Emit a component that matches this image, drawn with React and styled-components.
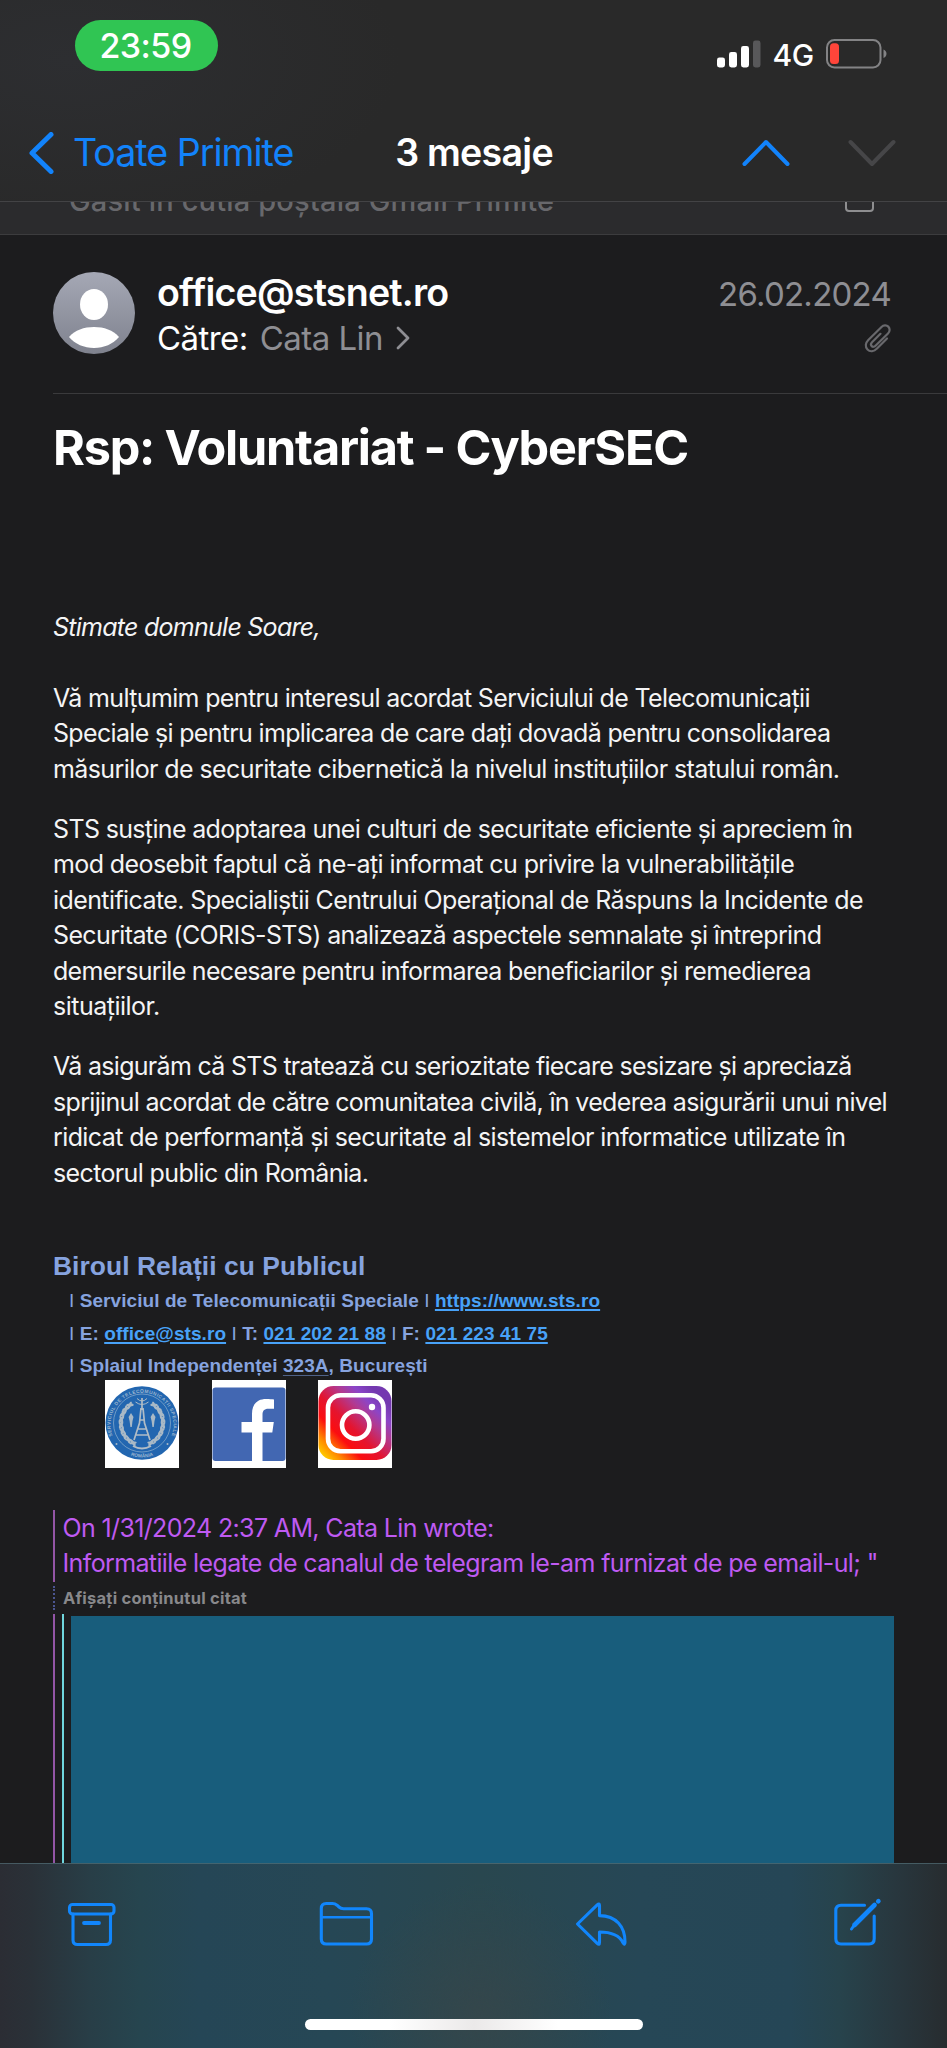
import React from 'react';
import styled, { createGlobalStyle } from 'styled-components';

const GlobalStyle = createGlobalStyle`
  *, *::before, *::after { box-sizing: border-box; }
  body { margin: 0; background: #1c1c1e; }
`;

const Screen = styled.div`
  width: 947px;
  height: 2048px;
  display: flex;
  flex-direction: column;
  overflow: hidden;
  background: #1c1c1e;
  color: #fff;
  font-family: Inter, 'Liberation Sans', sans-serif;
`;

/* ---------- top chrome ---------- */

const Chrome = styled.header`
  flex: none;
  height: 202px;
  border-bottom: 1px solid #434345;
  background:
    radial-gradient(ellipse 330px 170px at 70px 60px, #2d2e31, rgba(45, 46, 49, 0)),
    #292929;
`;

const StatusBar = styled.div`
  height: 104px;
  padding: 20px 59px 0 75px;
  display: flex;
  justify-content: space-between;
  align-items: flex-start;
`;

const TimePill = styled.div`
  width: 143px;
  height: 51px;
  padding-right: 2px;
  border-radius: 26px;
  background: #30c553;
  display: flex;
  align-items: center;
  justify-content: center;
  font-size: 34px;
  font-weight: 500;
  letter-spacing: -0.6px;
`;

const Indicators = styled.div`
  display: flex;
  align-items: center;
  margin-top: 13px;
  height: 42px;
`;

const Network = styled.span`
  font-size: 30px;
  font-weight: 500;
  letter-spacing: -0.3px;
  margin: 2px 12px 0 11px;
`;

const NavBar = styled.nav`
  height: 97px;
  padding: 0 51px 0 28px;
  display: grid;
  grid-template-columns: 1fr auto 1fr;
  align-items: center;
`;

const BackButton = styled.div`
  display: flex;
  align-items: center;
  gap: 19px;
  color: #1283fb;
  font-size: 37.6px;
  letter-spacing: -1px;
  white-space: nowrap;
`;

const NavTitle = styled.h1`
  margin: 0 0 0 24px;
  font-size: 37.6px;
  font-weight: 600;
  letter-spacing: -0.75px;
`;

const NavArrows = styled.div`
  display: flex;
  justify-content: flex-end;
  gap: 58px;
`;

const MailboxStrip = styled.div`
  flex: none;
  height: 33px;
  padding: 0 73px 0 69px;
  overflow: hidden;
  display: flex;
  justify-content: space-between;
  align-items: flex-start;
  background: #2b2b2d;
  border-bottom: 1px solid #3c3c3e;
`;

const MailboxText = styled.span`
  margin-top: -19px;
  line-height: 36px;
  font-size: 29px;
  font-weight: 500;
  letter-spacing: 0.17px;
  color: #68686c;
`;

const MailboxIcon = styled.svg`
  display: block;
  margin-top: -19px;
`;

/* ---------- message header ---------- */

const Message = styled.main`
  flex: 1;
  min-height: 0;
  overflow: hidden;
  padding-left: 53px;
`;

const MessageHeader = styled.section`
  height: 159px;
  padding: 35px 56px 0 0;
  display: flex;
  border-bottom: 1px solid #3a3a3c;
`;

const Avatar = styled.svg`
  flex: none;
  display: block;
  margin: 2px 22px 0 0;
`;

const Sender = styled.div`
  flex: 1;
`;

const SenderName = styled.div`
  line-height: 45px;
  font-size: 37.6px;
  font-weight: 600;
  letter-spacing: -0.78px;
`;

const Recipient = styled.div`
  display: flex;
  align-items: center;
  line-height: 46px;
  font-size: 33px;
  letter-spacing: -0.55px;
`;

const RecipientName = styled.span`
  margin: 0 13px 0 12px;
  color: #8e8e93;
`;

const Meta = styled.div`
  display: flex;
  flex-direction: column;
  align-items: flex-end;
`;

const DateText = styled.span`
  line-height: 48px;
  font-size: 33px;
  letter-spacing: -0.75px;
  color: #8e8e93;
`;

const ClipIcon = styled.svg`
  display: block;
  margin-top: 5px;
`;

const Subject = styled.h2`
  margin: 24px 0 0;
  line-height: 60px;
  font-size: 48.6px;
  font-weight: 700;
  letter-spacing: -1.22px;
`;

/* ---------- body ---------- */

const Greeting = styled.p`
  margin: 132px 0 35px;
  line-height: 35.5px;
  font-size: 25px;
  font-style: italic;
  letter-spacing: -0.74px;
  color: #f4f4f5;
`;

const Paragraph = styled.p`
  margin: 0 0 24.5px;
  color: #f4f4f5;
`;

const Line = styled.span`
  display: block;
  white-space: nowrap;
  line-height: 35.5px;
  font-size: 25px;
  letter-spacing: ${(p) => p.$track}px;
`;

const Signature = styled.section`
  padding-top: 32.5px;
  font-family: 'Liberation Sans', Arial, sans-serif;
  font-weight: 700;
  color: #86a3df;
`;

const Office = styled.div`
  line-height: 36px;
  font-size: 26.4px;
  letter-spacing: 0.06px;
  margin-bottom: 1px;
`;

const ContactLine = styled.div`
  padding-left: 16px;
  line-height: 32.6px;
  font-size: 19px;
  letter-spacing: 0.07px;
  white-space: nowrap;
`;

const Bar = styled.span`
  font-weight: 400;
`;

const Link = styled.span`
  color: #48a2f8;
  text-decoration: underline;
  text-decoration-thickness: 1.5px;
  text-underline-offset: 2px;
`;

const Detected = styled.span`
  text-decoration: underline;
  text-decoration-color: #4f6288;
  text-decoration-thickness: 1px;
  text-underline-offset: 3px;
`;

const Logos = styled.div`
  display: flex;
  gap: 32.5px;
  margin: -3px 0 42px 52px;
`;

const LogoTile = styled.svg`
  display: block;
  background: #fff;
`;

const Quote = styled.blockquote`
  margin: 0;
  height: 72px;
  border-left: 2px solid #9355a6;
  padding: 1px 0 0 7.5px;
  color: #bf5af2;
`;

const ShowQuoted = styled.div`
  height: 24px;
  margin: 4px 0;
  padding-left: 8px;
  border-left: 2px dotted #4b5591;
  line-height: 24px;
  font-size: 16.5px;
  font-weight: 700;
  letter-spacing: 0.24px;
  color: #88888b;
`;

const NestedQuote = styled.div`
  height: 260px;
  width: 841px;
  border-left: 2px solid #9355a6;
  padding-left: 7px;
`;

const InnerQuote = styled.div`
  height: 100%;
  border-left: 2px solid #70d6dd;
  padding: 2px 0 0 7px;
`;

const Redaction = styled.div`
  height: 100%;
  background: #185d7c;
`;

/* ---------- bottom toolbar ---------- */

const Toolbar = styled.footer`
  flex: none;
  height: 185px;
  border-top: 1px solid rgba(92, 125, 135, 0.55);
  padding: 33px 63px 18px 66px;
  display: flex;
  flex-direction: column;
  justify-content: space-between;
  align-items: center;
  background:
    radial-gradient(ellipse 130px 130px at 480px 150px, #34464b, rgba(52, 70, 75, 0)),
    linear-gradient(90deg, #2b2d34 0, #2a3138 32px, #283e47 90px, #26454f 140px, #254656 200px,
      #264755 330px, #29474f 480px, #264756 640px, #254656 790px, #27434c 840px, #28363d 900px, #272c2f 947px);
`;

const Actions = styled.div`
  width: 100%;
  display: flex;
  justify-content: space-between;
  align-items: flex-start;
`;

const HomeIndicator = styled.div`
  width: 338px;
  height: 11px;
  margin-right: 3px;
  border-radius: 6px;
  background: linear-gradient(90deg, #fff 25%, #ebe9e9 50%, #fff 75%);
`;

const ActionIcon = styled.svg`
  display: block;
  overflow: visible;
  fill: none;
  stroke: #1186fc;
  stroke-width: 3.1;
  stroke-linecap: round;
  stroke-linejoin: round;
`;

function Signal() {
  return (
    <svg width="44" height="28" viewBox="0 0 44 28" fill="#fff">
      <rect x="0" y="17.5" width="8" height="10" rx="2.4" />
      <rect x="12" y="12" width="8" height="15.500" rx="2.4" />
      <rect x="24" y="6" width="8" height="21.500" rx="2.4" />
      <rect x="36" y="0.500" width="7.500" height="27" rx="2.4" fill="#58585a" />
    </svg>
  );
}

function Battery() {
  return (
    <svg width="62" height="30" viewBox="0 0 62 30">
      <rect x="1" y="1" width="53.500" height="27.500" rx="7.500" fill="none" stroke="#838385" strokeWidth="2" />
      <rect x="4" y="4.300" width="9" height="20.800" rx="3.500" fill="#ff453a" />
      <path d="M57.500 10.500c4 1.200 4 7.300 0 8.500z" fill="#838385" />
    </svg>
  );
}

function Seal() {
  const leaves = [];
  for (let i = 0; i < 9; i += 1) {
    const deg = 115 + i * 15;
    const a = (deg * Math.PI) / 180;
    const x = 37 + 21 * Math.cos(a);
    const y = 43 + 22 * Math.sin(a);
    leaves.push(
      <g key={i}>
        <ellipse cx={x} cy={y} rx="1.500" ry="3.800" transform={`rotate(${deg + 30} ${x} ${y})`} />
        <ellipse cx={x} cy={y} rx="1.300" ry="3.600" transform={`rotate(${deg - 32} ${x} ${y})`} />
      </g>,
    );
  }
  return (
    <LogoTile width="74" height="88" viewBox="0 0 74 88">
      <defs>
        <path id="sealTop" d="M7.500 56A31.500 32 0 1 1 66.500 56" />
        <path id="sealBottom" d="M17 71A34 34 0 0 0 57 71" />
      </defs>
      <ellipse cx="37" cy="43" rx="36.500" ry="36.800" fill="#2266b0" />
      <ellipse cx="37" cy="43" rx="28.500" ry="29" fill="none" stroke="#8fb0cf" strokeWidth="0.700" />
      <g fill="#a9b9c6">
        {leaves}
        <g transform="translate(74 0) scale(-1 1)">{leaves}</g>
        <circle cx="11.500" cy="64" r="1" />
        <circle cx="62.500" cy="64" r="1" />
        <path d="M26 33l2.500 4-1 4-.7 6-1.400 0-.8-6-1-4zM48 33l2.500 4-1 4-.7 6-1.400 0-.8-6-1-4z" />
      </g>
      <g fill="none" stroke="#b0bcc6" strokeWidth="1.700">
        <path d="M37 18v12M36 28l-1.500 15L29 60M38 28l1.500 15L45 60M34.500 40h5M33 49h8M31 55h12" />
        <path d="M32 18.500q5 5 10 0M30.500 22q6.500 5 13 0" strokeWidth="1" />
        <path d="M28 66q9 5 18 0" strokeWidth="2" />
      </g>
      <g fill="#9db6cf" fontSize="4.800" fontFamily="Liberation Sans, sans-serif">
        <text><textPath href="#sealTop" textLength="122">SERVICIUL DE TELECOMUNICAȚII SPECIALE</textPath></text>
        <text><textPath href="#sealBottom" startOffset="50%" textAnchor="middle">ROMÂNIA</textPath></text>
      </g>
    </LogoTile>
  );
}

function Facebook() {
  return (
    <LogoTile width="74" height="88" viewBox="0 0 74 88">
      <rect x="0.500" y="7.500" width="73" height="73.500" rx="3" fill="#4267b2" />
      <path
        d="M40 88V52.500H29.500V42H40V34C40 24 45.500 19 54 19C57.500 19 60 19.200 62 19.600V28.800H56.500C52 28.800 50.500 31 50.500 35V42H61.800L60.300 52.500H50.500V88Z"
        fill="#fff"
      />
    </LogoTile>
  );
}

function Instagram() {
  return (
    <LogoTile width="74" height="88" viewBox="0 0 74 88">
      <defs>
        <linearGradient id="igBase" x1="0.050" y1="0.950" x2="0.850" y2="0.150">
          <stop offset="0" stopColor="#ffd000" />
          <stop offset="0.140" stopColor="#ff8a00" />
          <stop offset="0.320" stopColor="#fb0d10" />
          <stop offset="0.500" stopColor="#e4142f" />
          <stop offset="0.720" stopColor="#b13a92" />
          <stop offset="0.860" stopColor="#8b45c8" />
          <stop offset="1" stopColor="#7439b0" />
        </linearGradient>
      </defs>
      <rect x="0.500" y="6" width="73" height="74" rx="15" fill="url(#igBase)" />
      <g fill="none" stroke="#fff" strokeWidth="4.600">
        <rect x="10" y="15.300" width="55.500" height="56" rx="12.500" />
        <circle cx="37.700" cy="45" r="13.700" />
      </g>
      <circle cx="54" cy="27" r="3.200" fill="#fff" />
    </LogoTile>
  );
}

const paragraphs = [
  [
    ['Vă mulțumim pentru interesul acordat Serviciului de Telecomunicații', -0.65],
    ['Speciale și pentru implicarea de care dați dovadă pentru consolidarea', -0.67],
    ['măsurilor de securitate cibernetică la nivelul instituțiilor statului român.', -0.59],
  ],
  [
    ['STS susține adoptarea unei culturi de securitate eficiente și apreciem în', -0.65],
    ['mod deosebit faptul că ne-ați informat cu privire la vulnerabilitățile', -0.6],
    ['identificate. Specialiștii Centrului Operațional de Răspuns la Incidente de', -0.59],
    ['Securitate (CORIS-STS) analizează aspectele semnalate și întreprind', -0.63],
    ['demersurile necesare pentru informarea beneficiarilor și remedierea', -0.7],
    ['situațiilor.', -0.5],
  ],
  [
    ['Vă asigurăm că STS tratează cu seriozitate fiecare sesizare și apreciază', -0.7],
    ['sprijinul acordat de către comunitatea civilă, în vederea asigurării unui nivel', -0.67],
    ['ridicat de performanță și securitate al sistemelor informatice utilizate în', -0.6],
    ['sectorul public din România.', -0.63],
  ],
];

export default function App() {
  return (
    <Screen>
      <GlobalStyle />
      <Chrome>
        <StatusBar>
          <TimePill>23:59</TimePill>
          <Indicators>
            <Signal />
            <Network>4G</Network>
            <Battery />
          </Indicators>
        </StatusBar>
        <NavBar>
          <BackButton>
            <svg width="26" height="42" viewBox="0 0 26 42" fill="none" stroke="#1283fb" strokeWidth="5" strokeLinecap="round" strokeLinejoin="round">
              <path d="M23 2.500L4 21L23 39.500" />
            </svg>
            Toate Primite
          </BackButton>
          <NavTitle>3 mesaje</NavTitle>
          <NavArrows>
            <svg width="48" height="28" viewBox="0 0 48 28" fill="none" stroke="#1283fb" strokeWidth="4" strokeLinecap="round" strokeLinejoin="round">
              <path d="M2.500 25L24 3L45.500 25" />
            </svg>
            <svg width="48" height="28" viewBox="0 0 48 28" fill="none" stroke="#464648" strokeWidth="4" strokeLinecap="round" strokeLinejoin="round">
              <path d="M2.500 3L24 25L45.500 3" />
            </svg>
          </NavArrows>
        </NavBar>
      </Chrome>

      <MailboxStrip>
        <MailboxText>Găsit în cutia poștală Gmail Primite</MailboxText>
        <MailboxIcon width="29" height="29" viewBox="0 0 29 29" fill="none" stroke="#8e8e90" strokeWidth="2">
          <rect x="1" y="1" width="27" height="27" rx="3" />
        </MailboxIcon>
      </MailboxStrip>

      <Message>
        <MessageHeader>
          <Avatar width="82" height="82" viewBox="0 0 82 82">
            <defs>
              <linearGradient id="avatarFill" x1="0" y1="0" x2="0" y2="1">
                <stop offset="0" stopColor="#a5a8b5" />
                <stop offset="1" stopColor="#7f828e" />
              </linearGradient>
            </defs>
            <circle cx="41" cy="41" r="41" fill="url(#avatarFill)" />
            <ellipse cx="41" cy="32.500" rx="14" ry="15.500" fill="#fff" />
            <path d="M16 65C22 58 31 55 41 55S60 58 66 65C60 72 51 76 41 76S22 72 16 65Z" fill="#fff" />
          </Avatar>
          <Sender>
            <SenderName>office@stsnet.ro</SenderName>
            <Recipient>
              Către:
              <RecipientName>Cata Lin</RecipientName>
              <svg width="14" height="24" viewBox="0 0 14 24" fill="none" stroke="#8e8e93" strokeWidth="2.800" strokeLinecap="round" strokeLinejoin="round">
                <path d="M2 2L12 12L2 22" />
              </svg>
            </Recipient>
          </Sender>
          <Meta>
            <DateText>26.02.2024</DateText>
            <ClipIcon width="27" height="30" viewBox="0 0 27 30" fill="none" stroke="#68686c" strokeWidth="2.200" strokeLinecap="round" strokeLinejoin="round">
              <path d="M23 15.500L13 25.500C10 28.500 6 29 3.500 26.500C1 24 1.300 20 4.300 17L17.500 4C19.500 2 22.500 1.800 24.300 3.600C26.200 5.500 26 8.500 24 10.500L11.500 22.800C10.300 24 8.700 24.100 7.700 23.100C6.700 22.100 6.800 20.500 8 19.300L16.500 10.800" />
            </ClipIcon>
          </Meta>
        </MessageHeader>

        <Subject>Rsp: Voluntariat - CyberSEC</Subject>

        <Greeting>Stimate domnule Soare,</Greeting>
        {paragraphs.map((lines) => (
          <Paragraph key={lines[0][0]}>
            {lines.map(([text, track]) => (
              <Line key={text} $track={track}>{text}</Line>
            ))}
          </Paragraph>
        ))}

        <Signature>
          <Office>Biroul Relații cu Publicul</Office>
          <ContactLine>
            <Bar>I</Bar> Serviciul de Telecomunicații Speciale <Bar>I</Bar> <Link>https://www.sts.ro</Link>
          </ContactLine>
          <ContactLine>
            <Bar>I</Bar> E: <Link>office@sts.ro</Link> <Bar>I</Bar> T: <Link>021 202 21 88</Link> <Bar>I</Bar> F: <Link>021 223 41 75</Link>
          </ContactLine>
          <ContactLine>
            <Bar>I</Bar> Splaiul Independenței <Detected>323A</Detected>, București
          </ContactLine>
          <Logos>
            <Seal />
            <Facebook />
            <Instagram />
          </Logos>
        </Signature>

        <Quote>
          <Line $track={-0.64}>On 1/31/2024 2:37 AM, Cata Lin wrote:</Line>
          <Line $track={-0.625}>Informatiile legate de canalul de telegram le-am furnizat de pe email-ul; "</Line>
        </Quote>
        <ShowQuoted>Afișați conținutul citat</ShowQuoted>
        <NestedQuote>
          <InnerQuote>
            <Redaction />
          </InnerQuote>
        </NestedQuote>
      </Message>

      <Toolbar>
        <Actions>
          <ActionIcon width="51" height="50" viewBox="66 1897 51 50">
            <rect x="69.500" y="1904.500" width="44.500" height="9.500" rx="3" />
            <path d="M73 1914V1940Q73 1944.500 77.500 1944.500H106Q110.500 1944.500 110.500 1940V1914" />
            <path d="M84 1923H99" strokeWidth="3.800" />
          </ActionIcon>
          <ActionIcon width="54" height="50" viewBox="321.500 1897 54 50">
            <path d="M321.800 1939V1908.500Q321.800 1903.500 326.800 1903.500H333Q335.500 1903.500 337.500 1905.200L339.500 1907Q341.300 1908.700 344 1908.700H367Q372 1908.700 372 1913.700V1939Q372 1944 367 1944H326.800Q321.800 1944 321.800 1939Z" />
            <path d="M322 1917.300H372" strokeWidth="2.600" />
          </ActionIcon>
          <ActionIcon width="51" height="50" viewBox="579 1897 51 50">
            <path d="M577.500 1924L597.200 1904.800Q599.500 1902.800 599.500 1905.500V1915.600C616 1915.800 625 1926.500 625 1942Q625 1946 623 1942.700C619.500 1935.500 612 1932 599.500 1932V1942.500Q599.500 1945.500 597.200 1943.300Z" />
          </ActionIcon>
          <ActionIcon width="50" height="50" viewBox="834 1897 50 50">
            <path d="M864.500 1905.300H841Q835.800 1905.300 835.800 1910.500V1938.800Q835.800 1944 841 1944H869Q874.200 1944 874.200 1938.800V1916" />
            <path d="M854.500 1925L874.500 1905" strokeWidth="4.600" />
            <path d="M851.500 1929L854 1925.500" strokeWidth="3" />
            <path d="M878.200 1901.300L878.400 1901.100" strokeWidth="4.600" />
          </ActionIcon>
        </Actions>
        <HomeIndicator />
      </Toolbar>
    </Screen>
  );
}
